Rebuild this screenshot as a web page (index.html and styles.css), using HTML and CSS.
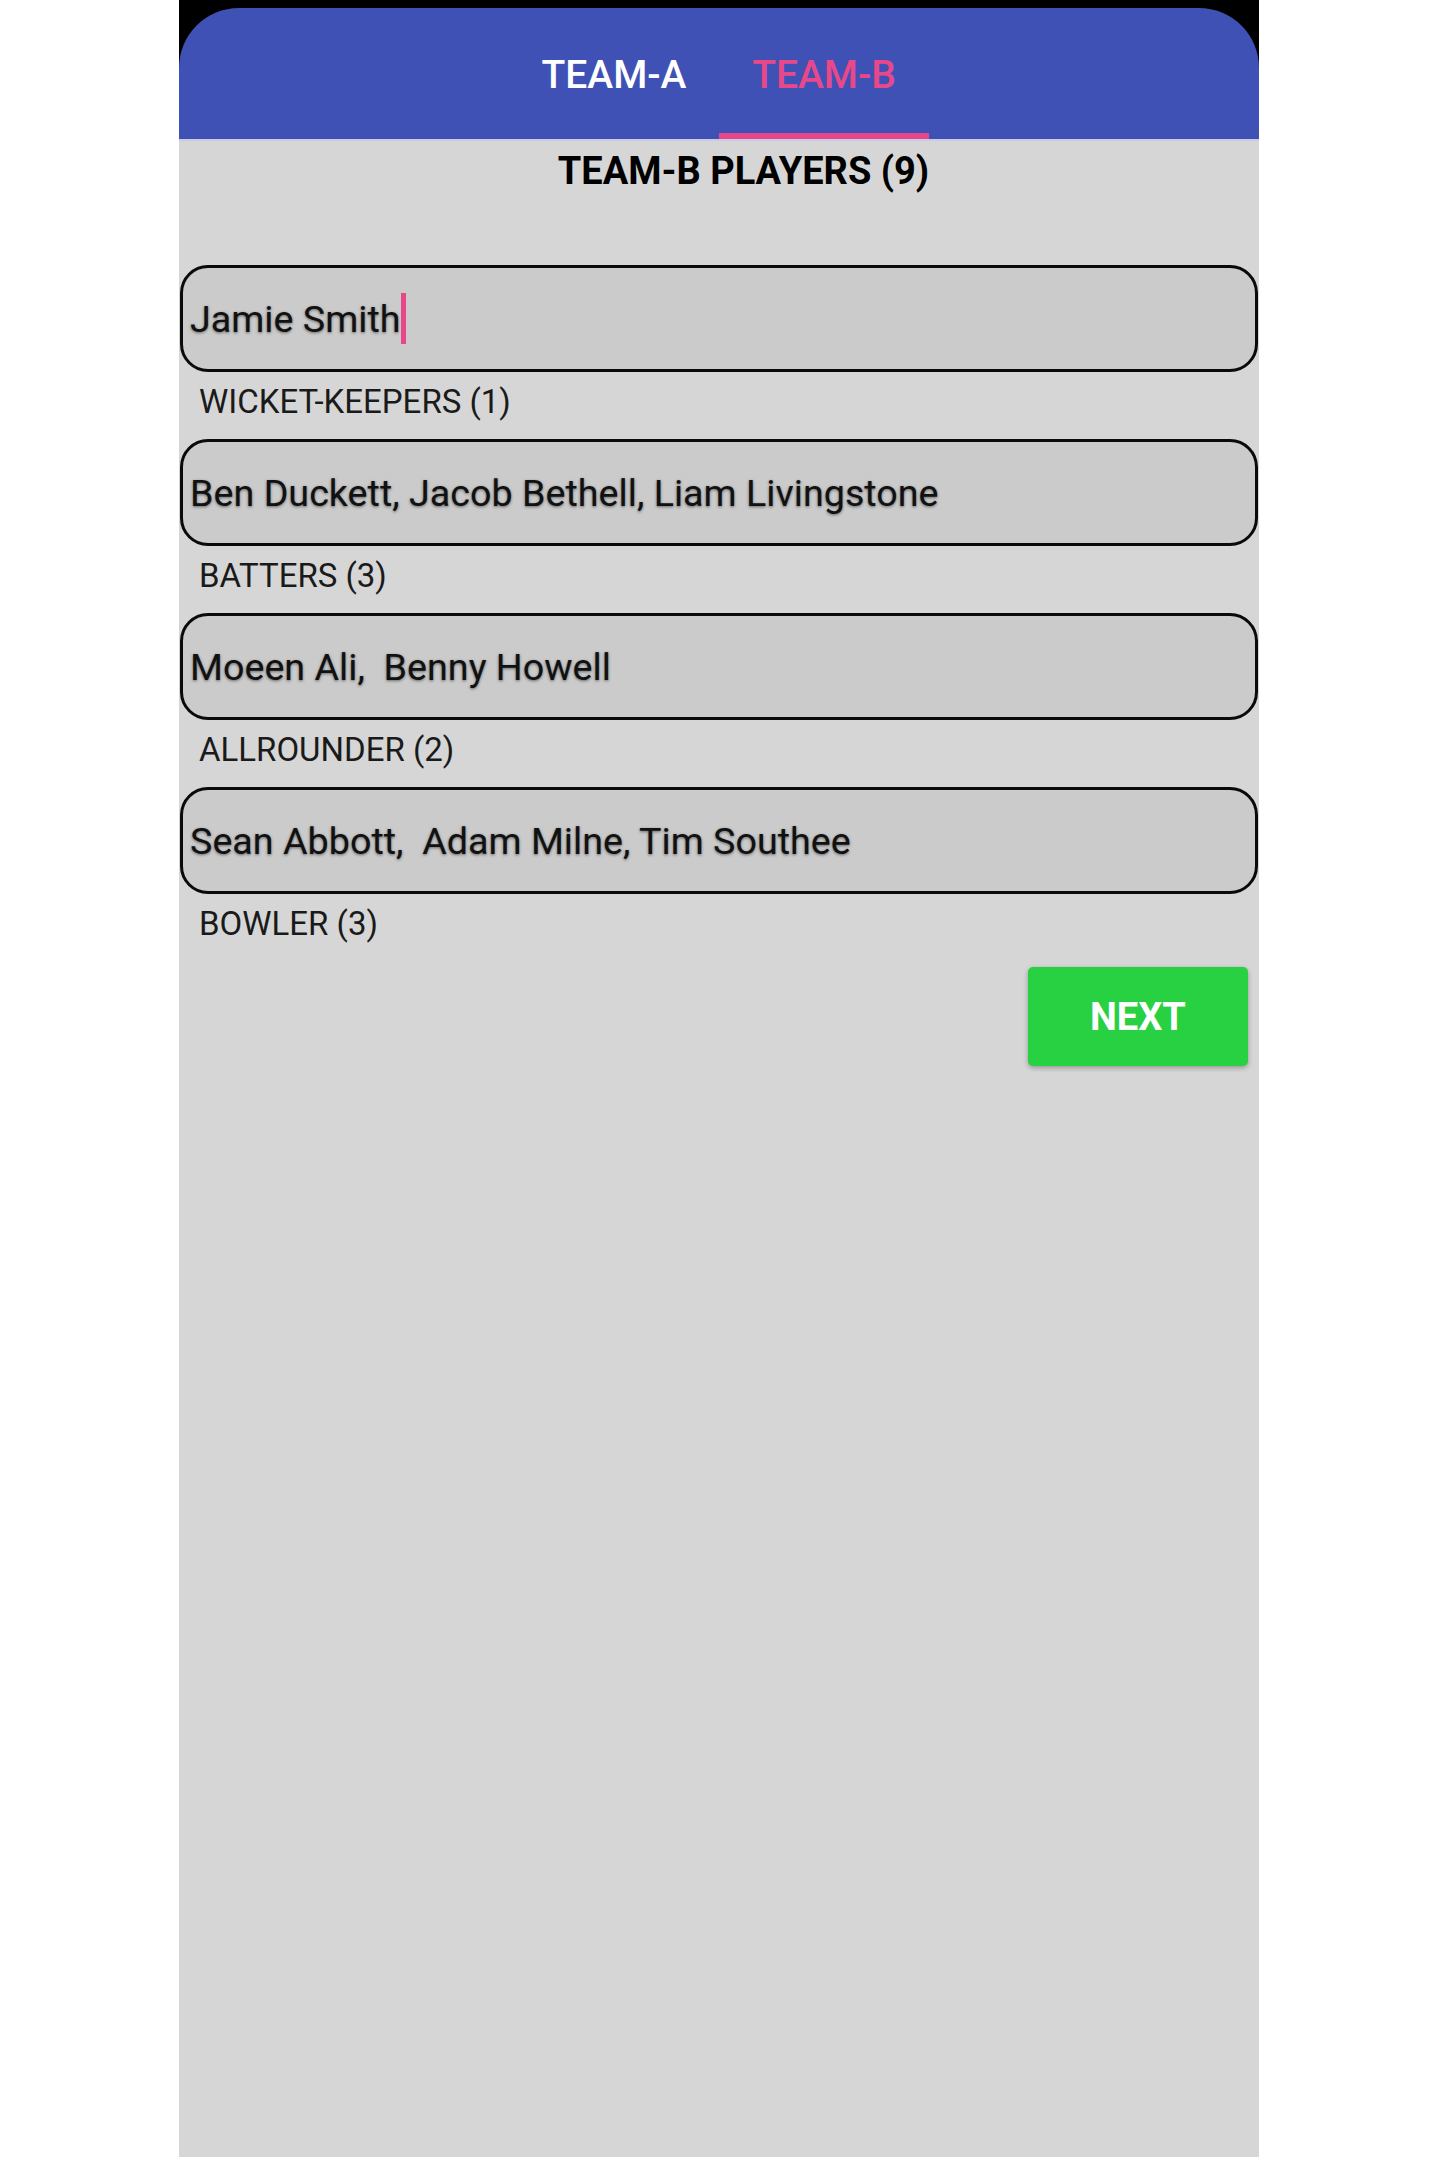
FILE: index.html
```html
<!DOCTYPE html>
<html lang="en">
<head>
<meta charset="utf-8">
<title>Team-B Players</title>
<link rel="stylesheet" href="styles.css">
</head>
<body>
<div class="phone">
  <div class="notch-bar">
    <header class="appbar">
      <nav class="tabs">
        <div class="tab">TEAM-A</div>
        <div class="tab active">TEAM-B</div>
      </nav>
    </header>
  </div>
  <main class="content">
    <h1 class="title">TEAM-B PLAYERS (9)</h1>
    <div class="group">
      <div class="field"><span class="field-text">Jamie Smith</span><span class="cursor"></span></div>
      <div class="label">WICKET-KEEPERS (1)</div>
    </div>
    <div class="group">
      <div class="field"><span class="field-text">Ben Duckett, Jacob Bethell, Liam Livingstone</span></div>
      <div class="label">BATTERS (3)</div>
    </div>
    <div class="group">
      <div class="field"><span class="field-text">Moeen Ali,&nbsp; Benny Howell</span></div>
      <div class="label">ALLROUNDER (2)</div>
    </div>
    <div class="group">
      <div class="field"><span class="field-text">Sean Abbott,&nbsp; Adam Milne, Tim Southee</span></div>
      <div class="label">BOWLER (3)</div>
    </div>
    <div class="actions">
      <button class="next">NEXT</button>
    </div>
  </main>
</div>
</body>
</html>
```

FILE: styles.css
```css
html, body {
  margin: 0;
  padding: 0;
  background: #ffffff;
}

body {
  font-family: Roboto, "Liberation Sans", sans-serif;
  height: 2157px;
  overflow: hidden;
}

.phone {
  width: 1080px;
  margin-left: 179px;
  height: 2157px;
  display: flex;
  flex-direction: column;
  background: #d6d6d6;
}

.notch-bar {
  background: #000000;
  padding-top: 8px;
}

.appbar {
  background: #3f51b5;
  height: 131px;
  border-radius: 60px 60px 0 0;
  display: flex;
  justify-content: center;
}

.tabs {
  display: flex;
  height: 100%;
}

.tab {
  width: 210px;
  box-sizing: border-box;
  height: 100%;
  padding-top: 45px;
  text-align: center;
  font-size: 39px;
  line-height: 44px;
  font-weight: 500;
  color: #ffffff;
  border-bottom: 6px solid transparent;
}

.tab.active {
  color: #e8488a;
  border-bottom-color: #e8488a;
}

.content {
  flex: 1;
  border-top: 2px solid #c8cbe6;
  display: flex;
  flex-direction: column;
}

.title {
  margin: 8px 0 0 0;
  padding-left: 49px;
  text-align: center;
  font-size: 38px;
  line-height: 45px;
  font-weight: 700;
  color: #000000;
  margin-bottom: 71px;
}

.group {
  display: flex;
  flex-direction: column;
  margin-bottom: 18px;
}

.field {
  margin: 0 1px;
  height: 107px;
  box-sizing: border-box;
  border: 3px solid #0a0a0a;
  border-radius: 28px;
  background: #cbcbcb;
  display: flex;
  align-items: center;
  padding-left: 7px;
}

.field-text {
  font-size: 37.7px;
  color: #111111;
  text-shadow: 0 1px 3px rgba(0, 0, 0, 0.5);
  white-space: pre;
}

.cursor {
  display: inline-block;
  width: 5px;
  height: 51px;
  background: #e8488a;
  margin-left: 0;
}

.label {
  margin-top: 11px;
  padding-left: 20px;
  font-size: 33px;
  line-height: 38px;
  color: #1a1a1a;
}

.actions {
  display: flex;
  justify-content: flex-end;
  padding-right: 11px;
  margin-top: 6px;
}

.next {
  width: 220px;
  height: 99px;
  border: none;
  border-radius: 5px;
  background: #27d142;
  color: #ffffff;
  font-family: Roboto, "Liberation Sans", sans-serif;
  font-size: 38px;
  font-weight: 700;
  box-shadow: 0 2px 5px rgba(0, 0, 0, 0.3);
  padding: 0;
}
```
